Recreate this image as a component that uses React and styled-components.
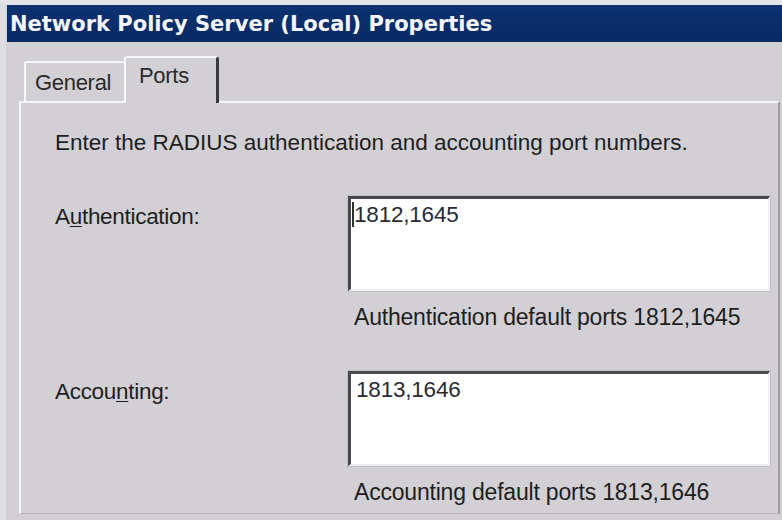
import React from "react";
import styled, { createGlobalStyle } from "styled-components";

const Global = createGlobalStyle`
  html, body { margin: 0; padding: 0; background: #d2d0d5; }
  body { width: 782px; height: 520px; overflow: hidden; }
`;

const Frame = styled.div`
  width: 782px;
  height: 520px;
  box-sizing: border-box;
  border-top: 5px solid #e4e4e8;
  border-left: 6px solid #dedde2;
  background: #d2d0d5;
  display: flex;
  flex-direction: column;
  font-family: "Liberation Sans", Arial, sans-serif;
  color: #1e1e1e;
`;

const TitleBar = styled.div`
  height: 37px;
  flex: none;
  background: linear-gradient(#0c3270, #072a63);
  margin-left: 1px;
  display: flex;
  align-items: center;
  padding-left: 3px;
  color: #f4f6fb;
  font-family: "DejaVu Sans", Verdana, sans-serif;
  font-weight: bold;
  font-size: 21px;
  letter-spacing: 0px;
  white-space: nowrap;
`;

const Body = styled.div`
  flex: 1;
  display: flex;
  flex-direction: column;
  padding: 16px 2px 6px 13px;
  min-height: 0;
`;

const TabStrip = styled.div`
  height: 45px;
  flex: none;
  display: flex;
  align-items: flex-end;
  padding-left: 5px;
  margin-bottom: -2px;
  position: relative;
  z-index: 1;
`;

const Tab = styled.div`
  box-sizing: border-box;
  height: ${(p) => (p.$active ? 47 : 40)}px;
  width: ${(p) => p.$w}px;
  background: #d2d0d5;
  border-top: 2px solid #f6f6f8;
  border-left: 2px solid #f6f6f8;
  border-right: ${(p) => (p.$active ? "3px solid #3a3a3e" : "1px solid #a8a6ac")};
  border-radius: 3px 3px 0 0;
  font-size: 22px;
  letter-spacing: -0.3px;
  line-height: 24px;
  padding: ${(p) => (p.$active ? "6px 0 0 13px" : "8px 0 0 9px")};
  margin-left: ${(p) => (p.$active ? "-1px" : "0")};
  align-self: flex-end;
  margin-bottom: ${(p) => (p.$active ? "0" : "2px")};
  color: #2a2a2a;
  white-space: nowrap;
`;

const Panel = styled.div`
  flex: 1;
  box-sizing: border-box;
  border-top: 2px solid #f6f6f8;
  border-left: 2px solid #f6f6f8;
  border-right: 2px solid #9e9ca2;
  border-bottom: 1px solid #b8b6bc;
  padding: 27px 0 0 34px;
`;

const Intro = styled.div`
  font-size: 22.5px;
  line-height: 26px;
  height: 26px;
  margin-bottom: 40px;
  white-space: nowrap;
`;

const Field = styled.div`
  display: grid;
  grid-template-columns: 293px 422px;
  margin-bottom: ${(p) => p.$gap}px;
`;

const Label = styled.div`
  font-size: 22.5px;
  letter-spacing: -0.3px;
  line-height: 26px;
  padding-top: 8px;
  u { text-decoration-thickness: 1px; text-underline-offset: 2px; }
`;

const Box = styled.div`
  box-sizing: border-box;
  height: 95px;
  background: #ffffff;
  border-top: 3px solid #4a4a4e;
  border-left: 3px solid #4a4a4e;
  border-right: 2px solid #f2f2f4;
  border-bottom: 2px solid #eeeef0;
  box-shadow: 0 0 0 1px #c0bec4;
  padding: 3px 0 0 ${(p) => p.$pad}px;
  font-size: 22.5px;
  letter-spacing: -0.2px;
  line-height: 26px;
  color: #2a2a30;
  display: flex;
  align-items: flex-start;
  white-space: nowrap;
`;

const Caret = styled.span`
  display: inline-block;
  width: 2px;
  height: 25px;
  background: #303030;
`;

const Hint = styled.div`
  grid-column: 2;
  font-size: 23px;
  letter-spacing: -0.2px;
  line-height: 26px;
  padding: 13px 0 0 6px;
  white-space: nowrap;
`;

export default function App() {
  return (
    <>
      <Global />
      <Frame>
        <TitleBar>Network Policy Server (Local) Properties</TitleBar>
        <Body>
          <TabStrip>
            <Tab $w={101}>General</Tab>
            <Tab $active $w={95}>Ports</Tab>
          </TabStrip>
          <Panel>
            <Intro>Enter the RADIUS authentication and accounting port numbers.</Intro>
            <Field $gap={41}>
              <Label>A<u>u</u>thentication:</Label>
              <Box $pad={1}>
                <Caret />
                1812,1645
              </Box>
              <Hint>Authentication default ports 1812,1645</Hint>
            </Field>
            <Field $gap={0}>
              <Label>Accou<u>n</u>ting:</Label>
              <Box $pad={5}>1813,1646</Box>
              <Hint>Accounting default ports 1813,1646</Hint>
            </Field>
          </Panel>
        </Body>
      </Frame>
    </>
  );
}
